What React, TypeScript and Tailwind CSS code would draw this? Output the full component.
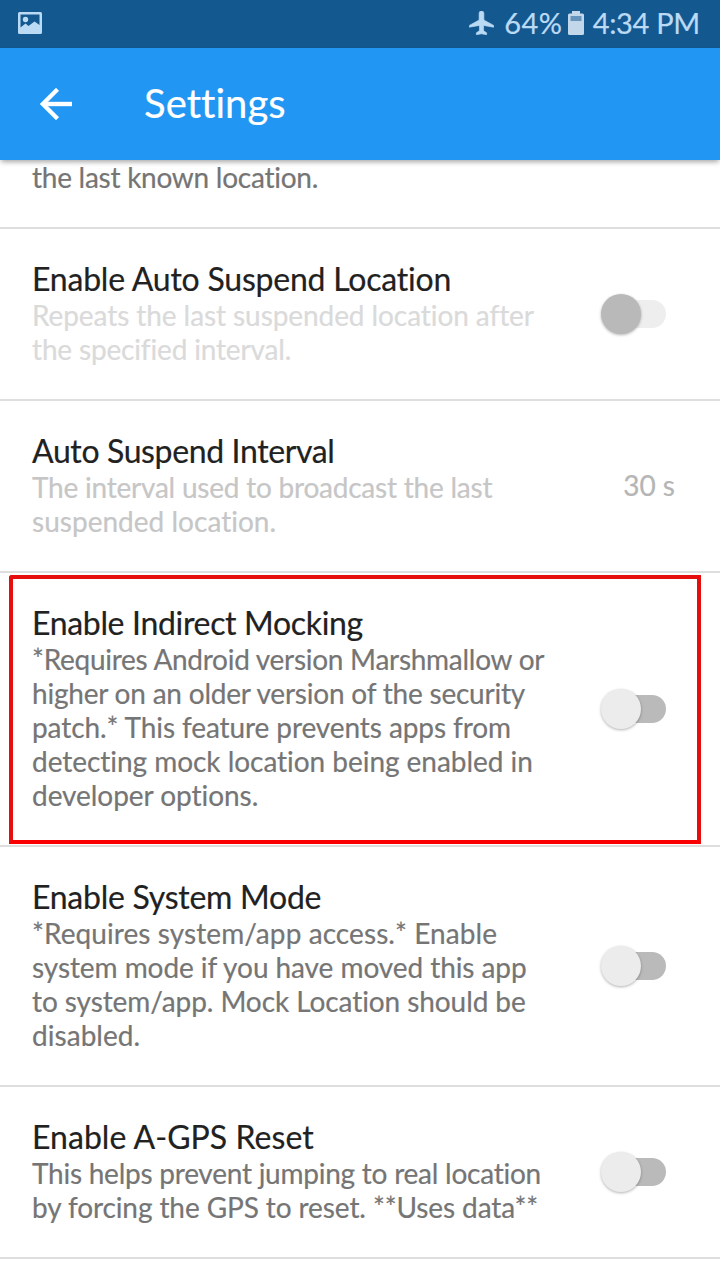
import type { ReactNode } from "react";

type Line = { text: string; tracking: string };

function Toggle({ disabled = false }: { disabled?: boolean }) {
  return (
    <div className="relative h-10 w-[66px] shrink-0" role="switch" aria-checked={false}>
      <div className={`absolute top-[6px] right-0 h-7 w-[56px] rounded-full ${disabled ? "bg-[#eeeeee]" : "bg-[#bababa]"}`} />
      <div
        className={`absolute top-0 left-px size-10 rounded-full shadow-[0_1px_3px_rgba(0,0,0,0.3)] ${
          disabled ? "bg-[#b9b9b9]" : "bg-[#ececec]"
        }`}
      />
    </div>
  );
}

function Row({
  title,
  titleTracking,
  lines,
  color = "text-[#757575]",
  control,
  highlighted = false,
}: {
  title: string;
  titleTracking: string;
  lines: Line[];
  color?: string;
  control: ReactNode;
  highlighted?: boolean;
}) {
  return (
    <section className="relative flex items-center justify-between border-b-2 border-[#dedede] pr-[54px] pl-8">
      <div className="pt-[30px] pb-[33px]">
        <h2 className={`text-[32px] leading-[39px] whitespace-nowrap text-[#212121] ${titleTracking}`}>{title}</h2>
        <div className={`text-[28px] leading-[34px] whitespace-nowrap ${color}`}>
          {lines.map((line) => (
            <p key={line.text} className={line.tracking}>
              {line.text}
            </p>
          ))}
        </div>
      </div>
      {control}
      {highlighted && (
        <div className="pointer-events-none absolute top-[2px] left-[9px] h-[269px] w-[692px] rounded-tl-[3px] border-4 border-[#e60d0d] border-b-[#fb0000]" />
      )}
    </section>
  );
}

export default function App() {
  return (
    <div className="flex h-[1280px] w-[720px] flex-col overflow-hidden bg-white font-['Lato','Roboto',sans-serif] [font-variant-ligatures:none] [-webkit-text-stroke:0.2px_currentColor]">
      <div className="flex h-12 shrink-0 items-center bg-[#145890] pr-[20px] pb-[2px] pl-[18px] text-[29px] leading-[36px] text-[#bbdaf4]">
        <svg width="24" height="22" viewBox="0 0 24 22" className="shrink-0">
          <path
            fillRule="evenodd"
            fill="#bbdaf4"
            d="M1.500 0h21Q24 0 24 1.500V20.500Q24 22 22.500 22h-21Q0 22 0 20.500V1.500Q0 0 1.500 0ZM2.500 2.500V15.500L7.500 11.500 10.500 14 16.500 9.500 21.500 13V2.500Z"
          />
          <circle cx="7.500" cy="7.500" r="2.700" fill="#bbdaf4" />
        </svg>
        <div className="ml-auto flex items-center">
          <svg width="25" height="24" viewBox="2.500 2 18 20" preserveAspectRatio="none" className="shrink-0">
            <path
              fill="#bbdaf4"
              stroke="#bbdaf4"
              strokeWidth="0.500"
              strokeLinejoin="round"
              d="M20.250 15.500v-1.500L13.200 9.500V3.800a1.700 1.700 0 0 0-3.400 0V9.500l-7.050 4.500v1.500l7.250-1.500V18.500l-2.200 1.700V21.700l3.700-.7 3.700.7v-1.500L13 18.500v-4.500z"
            />
          </svg>
          <span className="ml-[10px] tracking-[0.5px]">64%</span>
          <svg width="16" height="24" viewBox="0 0 16 24" className="ml-[5px] shrink-0">
            <path fill="#c3d7ea" d="M4 0h8v2.500h2.500Q16 2.500 16 4v18.500Q16 24 14.500 24h-13Q0 24 0 22.500V4Q0 2.500 1.500 2.500H4z" />
            <path fill="#6595bc" d="M2.500 5h11v5h-11z" />
          </svg>
          <span className="ml-[9px] tracking-[-0.3px]">4:34 PM</span>
        </div>
      </div>

      <header className="z-10 flex h-28 shrink-0 items-center bg-[#2196f3] pl-10 text-white shadow-[0_3px_5px_-1px_rgba(0,0,0,0.35)]">
        <svg width="32" height="32" viewBox="4 4 16 16" className="shrink-0">
          <path fill="currentColor" stroke="currentColor" strokeWidth="0.200" d="M20 11H7.830l5.590-5.590L12 4l-8 8 8 8 1.410-1.410L7.830 13H20v-2z" />
        </svg>
        <h1 className="ml-[72px] pb-[2px] text-[40px] leading-[48px] tracking-[0.05px]">Settings</h1>
      </header>

      <main>
        <section className="border-b-2 border-[#dedede] pb-[33px] pl-8">
          <p className="text-[28px] leading-[34px] tracking-[-0.26px] text-[#757575]">the last known location.</p>
        </section>
        <Row
          title="Enable Auto Suspend Location"
          titleTracking="tracking-[-0.22px]"
          color="text-[#dadada]"
          lines={[
            { text: "Repeats the last suspended location after", tracking: "tracking-[-0.08px]" },
            { text: "the specified interval.", tracking: "tracking-[-0.16px]" },
          ]}
          control={<Toggle disabled />}
        />
        <Row
          title="Auto Suspend Interval"
          titleTracking="tracking-[-0.37px]"
          color="text-[#c6c6c6]"
          lines={[
            { text: "The interval used to broadcast the last", tracking: "tracking-[-0.22px]" },
            { text: "suspended location.", tracking: "tracking-[0.02px]" },
          ]}
          control={<span className="-mr-[9px] pb-[2px] text-[28px] leading-[34px] tracking-[0px] text-[#b5b5b5]">30 s</span>}
        />
        <Row
          title="Enable Indirect Mocking"
          titleTracking="tracking-[-0.33px]"
          lines={[
            { text: "*Requires Android version Marshmallow or", tracking: "tracking-[-0.27px]" },
            { text: "higher on an older version of the security", tracking: "tracking-[-0.21px]" },
            { text: "patch.* This feature prevents apps from", tracking: "tracking-[-0.09px]" },
            { text: "detecting mock location being enabled in", tracking: "tracking-[-0.04px]" },
            { text: "developer options.", tracking: "tracking-[-0.05px]" },
          ]}
          control={<Toggle />}
          highlighted
        />
        <Row
          title="Enable System Mode"
          titleTracking="tracking-[-0.26px]"
          lines={[
            { text: "*Requires system/app access.* Enable", tracking: "tracking-[0.08px]" },
            { text: "system mode if you have moved this app", tracking: "tracking-[-0.07px]" },
            { text: "to system/app. Mock Location should be", tracking: "tracking-[-0.08px]" },
            { text: "disabled.", tracking: "tracking-[0.05px]" },
          ]}
          control={<Toggle />}
        />
        <Row
          title="Enable A-GPS Reset"
          titleTracking="tracking-[0.04px]"
          lines={[
            { text: "This helps prevent jumping to real location", tracking: "tracking-[-0.24px]" },
            { text: "by forcing the GPS to reset. **Uses data**", tracking: "tracking-[-0.1px]" },
          ]}
          control={<Toggle />}
        />
      </main>
    </div>
  );
}
